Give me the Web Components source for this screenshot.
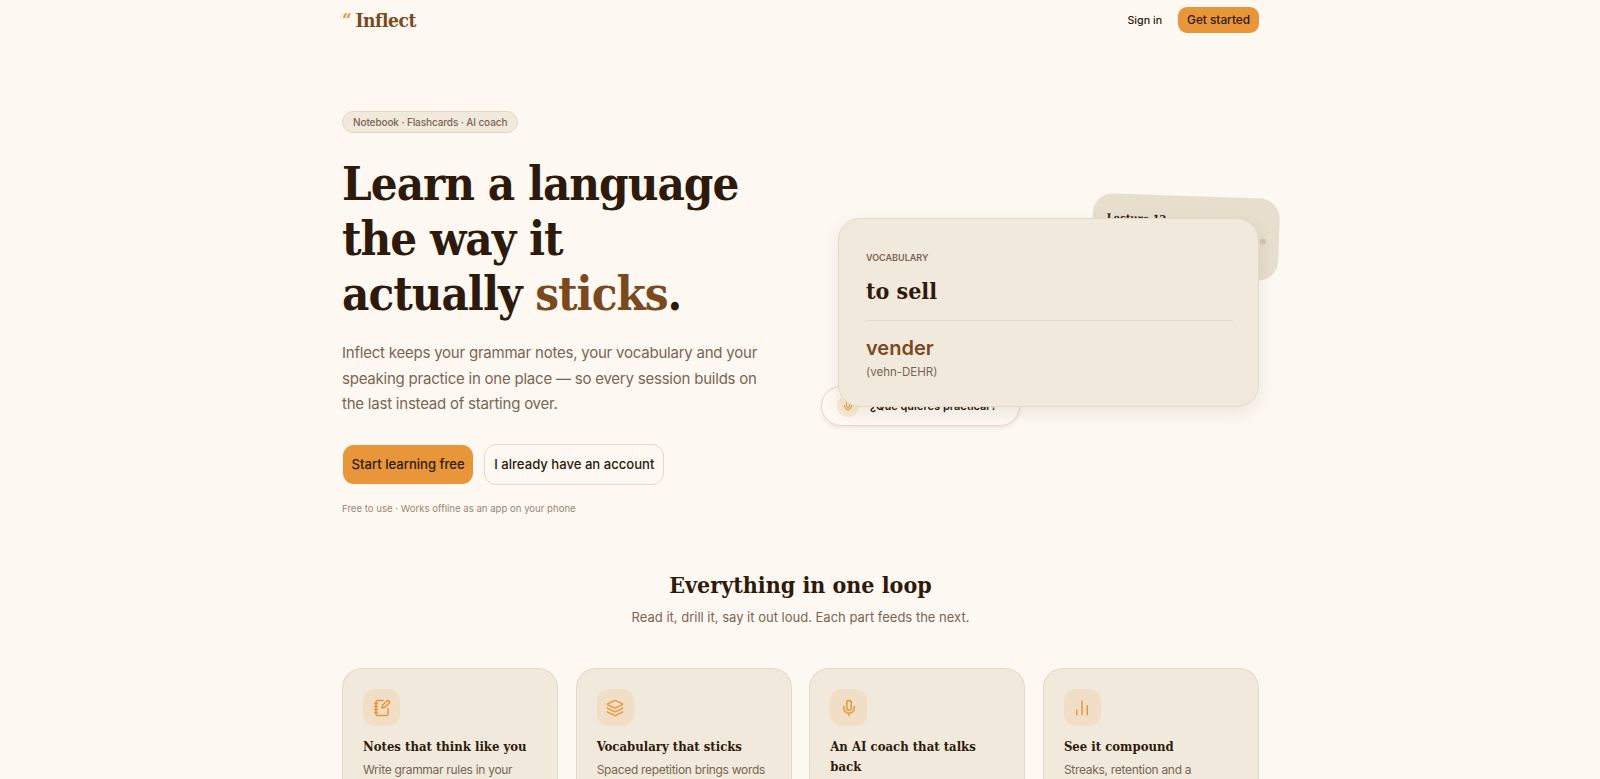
<!doctype html>
<html><head><meta charset="utf-8">
<style>
html,body{margin:0;height:779px;overflow:hidden;background:#fdf8f2}
body{font-family:Inter,"Noto Sans",sans-serif;color:#2e1a0b}
</style></head><body>
<app-shell>
<site-nav></site-nav>
<hero-section></hero-section>
<features-section></features-section>
</app-shell>
<script>
const serif='"DejaVu Serif Condensed","DejaVu Serif","Liberation Serif",serif';
const def=(n,h)=>customElements.define(n,class extends HTMLElement{connectedCallback(){if(!this.shadowRoot){this.attachShadow({mode:'open'}).innerHTML=h(this)}}});
def('app-shell',()=>`<style>:host{display:block;width:917px;margin:0 0 0 342px}</style><slot></slot>`);
def('site-nav',()=>`<style>
:host{display:flex;align-items:center;justify-content:space-between;height:40px}
.logo{font:700 19px ${serif};color:#7a4a1e;display:flex;gap:4px;letter-spacing:-.4px}
.logo i{color:#e99539;font-style:normal}
.r{display:flex;align-items:center;gap:16px;font-size:10.7px;font-weight:500}
.b{background:#e99539;border-radius:9px;padding:0 9px;height:26px;display:flex;align-items:center;font-size:11.8px;color:#2e1a0b}
</style><div class="logo"><i>“</i>Inflect</div><div class="r"><span>Sign in</span><span class="b">Get started</span></div>`);
def('hero-section',()=>`<style>
:host{display:grid;grid-template-columns:1fr 1fr;padding-top:70px;height:530px;box-sizing:border-box;align-items:start}
.badge{display:inline-block;background:#f1e9dc;border:1px solid #e3d9c8;border-radius:99px;font-size:10px;font-weight:500;color:#7a6552;padding:4px 10px;letter-spacing:-.1px}
h1{font:700 47px/55px ${serif};margin:23px 0 0;letter-spacing:-1px}
h1 b{color:#7a4a1e}
p{font-size:15px;line-height:25.5px;color:#7a6552;margin:19px 0 0;width:430px;letter-spacing:-.22px}
.btns{display:flex;gap:10px;margin-top:27px;align-items:center}
.btns span{display:flex;align-items:center;border-radius:12px;font-size:13.1px;font-weight:500;box-sizing:border-box}
.p{background:#e99539;background-clip:padding-box;border:1.5px solid transparent;height:41px;padding:0 8.5px}
.s{border:1.5px solid #e3d9c8;height:41px;padding:0 9px}
small{display:block;font-size:9.6px;color:#9a8772;margin-top:18px}
.art{position:relative;height:300px}
.main{position:absolute;left:37.5px;top:108px;width:421px;height:189px;box-sizing:border-box;padding:33px 25px 33px 27px;background:#f1e9dc;border:1px solid #e3d9c8;border-radius:22px;box-shadow:0 6px 18px #2e1a0b14;z-index:2}
.vo{font-size:9px;font-weight:600;color:#7a6552}
.en{font:700 23px ${serif};margin-top:14px}
hr{border:0;border-top:1px solid #e3d9c8;margin:16px 0 15px}
.es{font-size:20px;font-weight:600;color:#7a4a1e}
.ph{font-size:11.5px;color:#7a6552;margin-top:5px}
.back{position:absolute;left:291px;top:86px;width:187px;height:82px;box-sizing:border-box;padding:18px 14px;background:#e7dece;border-radius:20px;transform:rotate(2deg);font:700 11px ${serif}}
.dot{position:absolute;right:13px;top:40px;width:6px;height:6px;border-radius:50%;background:#cfc5b6}
.pill{position:absolute;left:20.5px;top:276px;width:199px;height:40px;box-sizing:border-box;border:1px solid #e3d9c8;border-radius:22px;background:#fdf8f2;display:flex;align-items:center;gap:11px;padding-left:15px;font-size:11px;font-weight:600;box-shadow:0 2px 4px #2e1a0b14}
.mic{width:22px;height:22px;border-radius:50%;background:#f8e8d2;display:flex;align-items:center;justify-content:center}
</style><div>
<span class="badge">Notebook · Flashcards · AI coach</span>
<h1>Learn a language<br>the way it<br>actually <b>sticks</b>.</h1>
<p>Inflect keeps your grammar notes, your vocabulary and your speaking practice in one place — so every session builds on the last instead of starting over.</p>
<div class="btns"><span class="p">Start learning free</span><span class="s">I already have an account</span></div>
<small>Free to use · Works offline as an app on your phone</small>
</div><div class="art">
<div class="back">Lecture 12<i class="dot"></i></div>
<div class="pill"><span class="mic"><svg width="12" height="12" viewBox="0 0 24 24" fill="none" stroke="#e99539" stroke-width="2"><path d="M12 2a3 3 0 0 0-3 3v7a3 3 0 0 0 6 0V5a3 3 0 0 0-3-3Z"/><path d="M19 10v2a7 7 0 0 1-14 0v-2M12 19v3"/></svg></span>¿Qué quieres practicar?</div>
<div class="main"><div class="vo">VOCABULARY</div><div class="en">to sell</div><hr><div class="es">vender</div><div class="ph">(vehn-DEHR)</div></div>
</div>`);
def('feature-card',e=>`<style>
:host{display:block;height:130px;box-sizing:border-box;padding:20px;background:#f1e9dc;border:1px solid #e3d9c8;border-bottom:0;border-radius:20px 20px 0 0}
.i{width:37px;height:37px;border-radius:12px;background:#f0dfc6;display:flex;align-items:center;justify-content:center}
svg{width:18px;height:18px;fill:none;stroke:#e99539;stroke-width:2;stroke-linecap:round;stroke-linejoin:round}
h3{font:700 13px/20px ${serif};margin:11px 0 3px}
p{margin:0;font-size:12px;line-height:20px;color:#7a6552;letter-spacing:-.3px;white-space:nowrap}
</style><div class="i"><svg viewBox="0 0 24 24">${e.getAttribute('icon')}</svg></div><h3>${e.getAttribute('t')}</h3><p><slot></slot></p>`);
def('features-section',()=>`<style>
:host{display:block;text-align:center}
h2{font:700 23px/30px ${serif};margin:0}
.sub{font-size:13px;color:#7a6552;margin:9px 0 0}
.g{display:grid;grid-template-columns:repeat(4,1fr);gap:17.5px;margin-top:43px;text-align:left}
</style><h2>Everything in one loop</h2><div class="sub">Read it, drill it, say it out loud. Each part feeds the next.</div>
<div class="g">
<feature-card t="Notes that think like you" icon='<path d="M13.4 2H6a2 2 0 0 0-2 2v16a2 2 0 0 0 2 2h12a2 2 0 0 0 2-2v-7.4"/><path d="M2 6h4M2 10h4M2 14h4M2 18h4"/><path d="M21.378 5.626a1 1 0 1 0-3.004-3.004l-5.01 5.012a2 2 0 0 0-.506.854l-.837 2.87a.5.5 0 0 0 .62.62l2.87-.837a2 2 0 0 0 .854-.506z"/>'>Write grammar rules in your</feature-card>
<feature-card t="Vocabulary that sticks" icon='<path d="M12.83 2.18a2 2 0 0 0-1.66 0L2.6 6.08a1 1 0 0 0 0 1.83l8.58 3.91a2 2 0 0 0 1.66 0l8.58-3.9a1 1 0 0 0 0-1.83z"/><path d="M2 12a1 1 0 0 0 .58.91l8.6 3.91a2 2 0 0 0 1.65 0l8.58-3.9A1 1 0 0 0 22 12"/><path d="M2 17a1 1 0 0 0 .58.91l8.6 3.91a2 2 0 0 0 1.65 0l8.58-3.9A1 1 0 0 0 22 17"/>'>Spaced repetition brings words</feature-card>
<feature-card t="An AI coach that talks back" icon='<path d="M12 2a3 3 0 0 0-3 3v7a3 3 0 0 0 6 0V5a3 3 0 0 0-3-3Z"/><path d="M19 10v2a7 7 0 0 1-14 0v-2M12 19v3"/>'></feature-card>
<feature-card t="See it compound" icon='<path d="M5 21v-6M12 21V3M19 21V9"/>'>Streaks, retention and a</feature-card>
</div>`);
</script></body></html>
